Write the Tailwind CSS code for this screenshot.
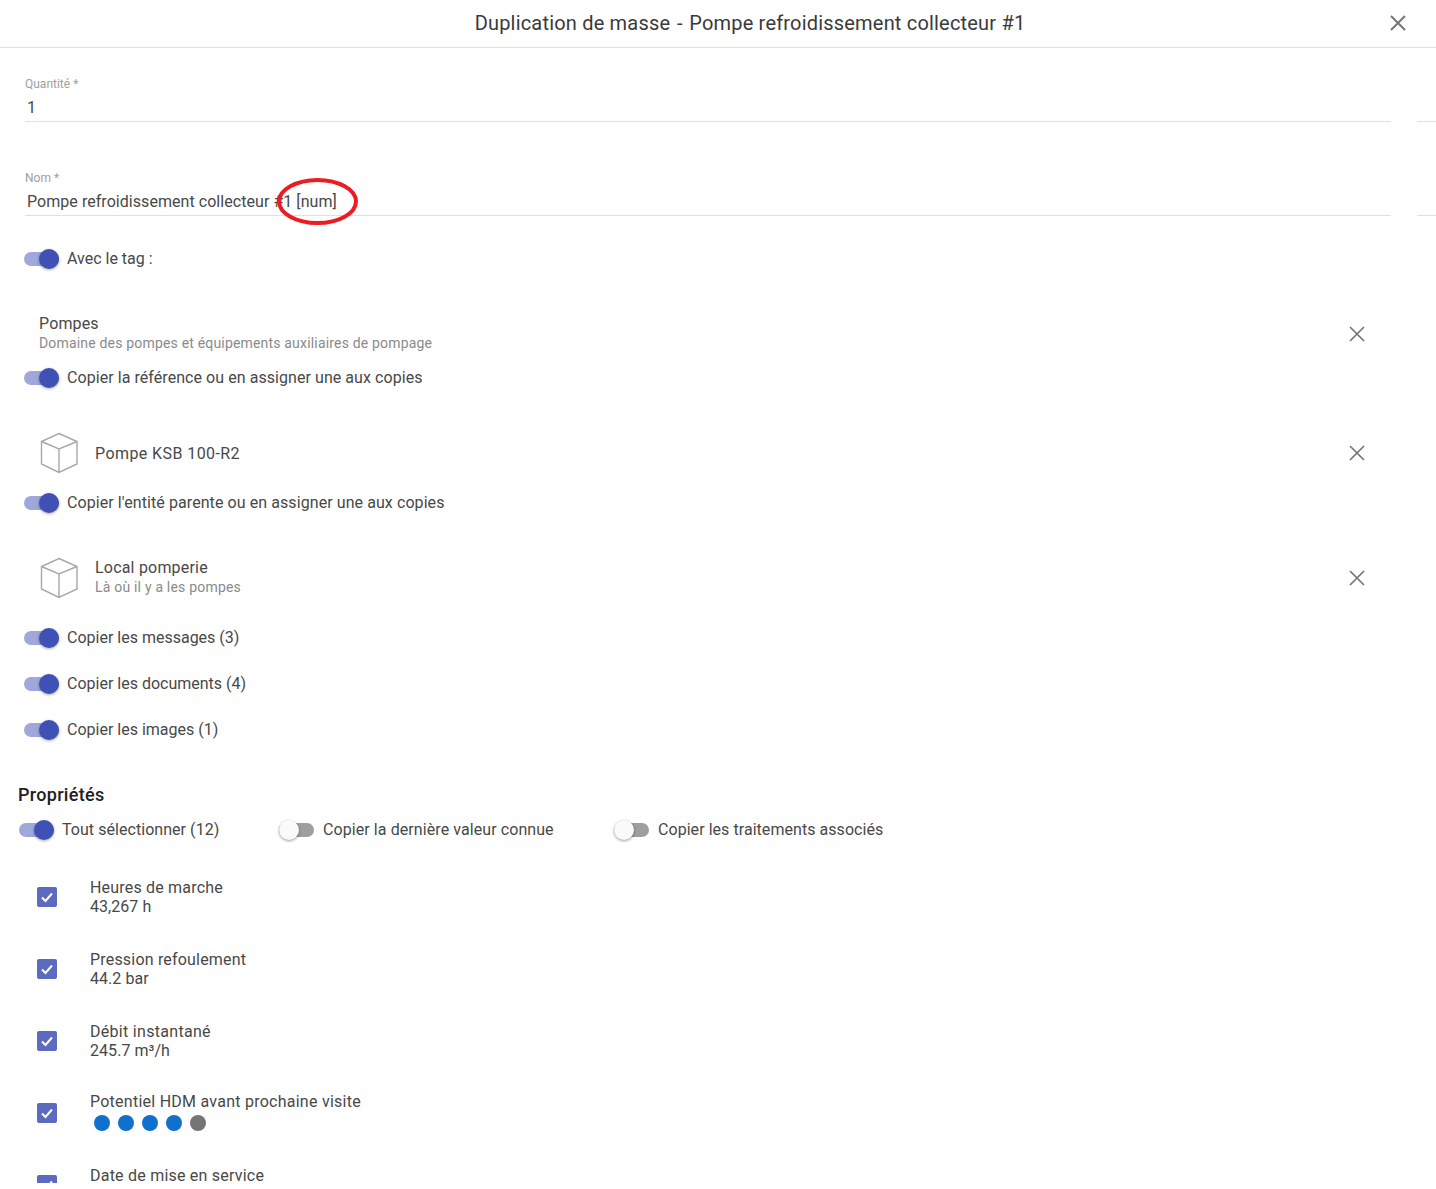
<!DOCTYPE html>
<html lang="fr">
<head>
<meta charset="utf-8">
<script src="https://cdn.jsdelivr.net/npm/@tailwindcss/browser@4"></script>
<title>Duplication de masse</title>
</head>
<body class="bg-white font-['Roboto',sans-serif] text-[16px] text-[#484848]">
<div class="h-[1183px] overflow-hidden relative">
  <header class="relative h-[48px] border-b border-[#e0e0e0] flex items-center justify-center pl-[64px] pb-[2px]">
    <h1 class="text-[20px] tracking-[0.19px] text-[#3a3a3a] font-normal">Duplication de masse <span class="mx-[1.5px]">-</span> Pompe refroidissement collecteur #1</h1>
    <svg class="absolute left-[1390px] top-[15px] w-4 h-4" viewBox="0 0 16 16" fill="none" stroke="#757575" stroke-width="2"><path d="M1 1 15 15M15 1 1 15"/></svg>
  </header>

  <section class="h-[74px] flex items-end gap-[26px] pl-[25px]">
    <div class="flex-1 h-[46px] pt-[1px] border-b border-[#e0e0e0]"><div class="text-[12px] leading-[14px] text-[#9e9e9e]">Quantité *</div><div class="pl-[2px] leading-[24px] mt-[5px]">1</div></div>
    <div class="w-[19px] border-b border-[#e0e0e0]"></div>
  </section>
  <section class="h-[94px] flex items-end gap-[26px] pl-[25px] relative">
    <div class="flex-1 h-[46px] pt-[1px] border-b border-[#e0e0e0]"><div class="text-[12px] leading-[14px] text-[#9e9e9e]">Nom *</div><div class="pl-[2px] leading-[24px] mt-[5px] tracking-[0.05px]">Pompe refroidissement collecteur #1 [num]</div></div>
    <div class="w-[19px] border-b border-[#e0e0e0]"></div>
    <svg class="absolute left-[275px] top-[56px] w-[84px] h-[48px]" viewBox="0 0 84 48" fill="none" stroke="#ed1c24" stroke-width="4"><ellipse cx="42.5" cy="23.5" rx="38.5" ry="21.5"/></svg>
  </section>

  <div class="mt-[23px] h-[40px] pl-[24px] flex items-center gap-[8px] w-max">
    <span class="relative block w-[35px] h-[14px] rounded-full bg-[#9fa8da]"><span class="absolute right-0 top-[-3px] w-5 h-5 rounded-full bg-[#3f51b5] shadow-[0_1px_3px_rgba(0,0,0,0.35)]"></span></span><span>Avec le tag :</span>
  </div>

  <div class="mt-[31px] h-[48px] pl-[39px] pr-[71px] flex items-center justify-between">
    <div class="pb-[2px]"><div class="pt-[2px] leading-[18px] tracking-[0.15px]">Pompes</div><div class="text-[14px] leading-[20px] tracking-[0.18px] text-[#8a8a8a]">Domaine des pompes et équipements auxiliaires de pompage</div></div>
    <svg class="w-[16px] h-[16px]" viewBox="0 0 16 16" fill="none" stroke="#757575" stroke-width="1.7"><path d="M1 1 15 15M15 1 1 15"/></svg>
  </div>

  <div class="h-[40px] pl-[24px] flex items-center gap-[8px] w-max">
    <span class="relative block w-[35px] h-[14px] rounded-full bg-[#9fa8da]"><span class="absolute right-0 top-[-3px] w-5 h-5 rounded-full bg-[#3f51b5] shadow-[0_1px_3px_rgba(0,0,0,0.35)]"></span></span><span class="tracking-[0.06px]">Copier la référence ou en assigner une aux copies</span>
  </div>

  <div class="mt-[25px] h-[60px] pl-[39px] pr-[71px] flex items-center">
    <svg class="w-[40px] h-[42px] mr-[16px]" viewBox="0 0 40 42" fill="none" stroke="#a8a8a8" stroke-width="1.4"><path d="M20 1.5 38 9.5V32L20 40.5 2.5 32V9.5ZM2.5 9.5 20 17 38 9.5M20 17V40.5"/></svg>
    <div class="flex-1 pt-[2px] tracking-[0.42px]">Pompe KSB 100-R2</div>
    <svg class="w-[16px] h-[16px]" viewBox="0 0 16 16" fill="none" stroke="#757575" stroke-width="1.7"><path d="M1 1 15 15M15 1 1 15"/></svg>
  </div>

  <div class="h-[40px] pl-[24px] flex items-center gap-[8px] w-max">
    <span class="relative block w-[35px] h-[14px] rounded-full bg-[#9fa8da]"><span class="absolute right-0 top-[-3px] w-5 h-5 rounded-full bg-[#3f51b5] shadow-[0_1px_3px_rgba(0,0,0,0.35)]"></span></span><span class="tracking-[0.08px]">Copier l'entité parente ou en assigner une aux copies</span>
  </div>

  <div class="mt-[25px] h-[60px] pl-[39px] pr-[71px] flex items-center">
    <svg class="w-[40px] h-[42px] mr-[16px]" viewBox="0 0 40 42" fill="none" stroke="#a8a8a8" stroke-width="1.4"><path d="M20 1.5 38 9.5V32L20 40.5 2.5 32V9.5ZM2.5 9.5 20 17 38 9.5M20 17V40.5"/></svg>
    <div class="flex-1 pb-[2px]"><div class="pt-[2px] leading-[18px] tracking-[0.2px]">Local pomperie</div><div class="text-[14px] leading-[20px] tracking-[0.2px] text-[#8a8a8a]">Là où il y a les pompes</div></div>
    <svg class="w-[16px] h-[16px]" viewBox="0 0 16 16" fill="none" stroke="#757575" stroke-width="1.7"><path d="M1 1 15 15M15 1 1 15"/></svg>
  </div>

  <div class="mt-[10px] flex flex-col gap-[6px]">
    <div class="h-[40px] pl-[24px] flex items-center gap-[8px] w-max"><span class="relative block w-[35px] h-[14px] rounded-full bg-[#9fa8da]"><span class="absolute right-0 top-[-3px] w-5 h-5 rounded-full bg-[#3f51b5] shadow-[0_1px_3px_rgba(0,0,0,0.35)]"></span></span><span>Copier les messages (3)</span></div>
    <div class="h-[40px] pl-[24px] flex items-center gap-[8px] w-max"><span class="relative block w-[35px] h-[14px] rounded-full bg-[#9fa8da]"><span class="absolute right-0 top-[-3px] w-5 h-5 rounded-full bg-[#3f51b5] shadow-[0_1px_3px_rgba(0,0,0,0.35)]"></span></span><span>Copier les documents (4)</span></div>
    <div class="h-[40px] pl-[24px] flex items-center gap-[8px] w-max"><span class="relative block w-[35px] h-[14px] rounded-full bg-[#9fa8da]"><span class="absolute right-0 top-[-3px] w-5 h-5 rounded-full bg-[#3f51b5] shadow-[0_1px_3px_rgba(0,0,0,0.35)]"></span></span><span>Copier les images (1)</span></div>
  </div>

  <h2 class="mt-[33px] pl-[18px] text-[18px] leading-[24px] tracking-[0.3px] font-medium text-[#212121]">Propriétés</h2>
  <div class="mt-[3px] h-[40px] pl-[19px] flex items-center">
    <span class="relative block w-[35px] h-[14px] rounded-full bg-[#9fa8da] mr-[8px]"><span class="absolute right-0 top-[-3px] w-5 h-5 rounded-full bg-[#3f51b5] shadow-[0_1px_3px_rgba(0,0,0,0.35)]"></span></span><span class="w-[217px] tracking-[0.05px]">Tout sélectionner (12)</span>
    <span class="relative block w-[35px] h-[14px] rounded-full bg-[#9e9e9e] mr-[9px]"><span class="absolute left-0 top-[-3px] w-5 h-5 rounded-full bg-[#fafafa] shadow-[0_1px_3px_rgba(0,0,0,0.4)]"></span></span><span class="w-[291px] tracking-[0.08px]">Copier la dernière valeur connue</span>
    <span class="relative block w-[35px] h-[14px] rounded-full bg-[#9e9e9e] mr-[9px]"><span class="absolute left-0 top-[-3px] w-5 h-5 rounded-full bg-[#fafafa] shadow-[0_1px_3px_rgba(0,0,0,0.4)]"></span></span><span class="tracking-[0.05px]">Copier les traitements associés</span>
  </div>

  <ul class="mt-[37px] flex flex-col">
    <li class="h-[72px] pl-[37px] flex items-start">
      <span class="w-5 h-5 rounded-[2px] bg-[#5c6bc0] mr-[33px] flex items-center justify-center"><svg class="w-[12px] h-[12px]" viewBox="0 0 12 12" fill="none" stroke="#fff" stroke-width="2"><path d="M1 6.5 4.5 10 11 2.5"/></svg></span>
      <div class="-mt-[9px]"><div class="leading-[19px] tracking-[0.19px]">Heures de marche</div><div class="leading-[19px] tracking-[0.05px]">43,267 h</div></div>
    </li>
    <li class="h-[72px] pl-[37px] flex items-start">
      <span class="w-5 h-5 rounded-[2px] bg-[#5c6bc0] mr-[33px] flex items-center justify-center"><svg class="w-[12px] h-[12px]" viewBox="0 0 12 12" fill="none" stroke="#fff" stroke-width="2"><path d="M1 6.5 4.5 10 11 2.5"/></svg></span>
      <div class="-mt-[9px]"><div class="leading-[19px] tracking-[0.19px]">Pression refoulement</div><div class="leading-[19px] tracking-[0.05px]">44.2 bar</div></div>
    </li>
    <li class="h-[72px] pl-[37px] flex items-start">
      <span class="w-5 h-5 rounded-[2px] bg-[#5c6bc0] mr-[33px] flex items-center justify-center"><svg class="w-[12px] h-[12px]" viewBox="0 0 12 12" fill="none" stroke="#fff" stroke-width="2"><path d="M1 6.5 4.5 10 11 2.5"/></svg></span>
      <div class="-mt-[9px]"><div class="leading-[19px] tracking-[0.3px]">Débit instantané</div><div class="leading-[19px] tracking-[0.05px]">245.7 m³/h</div></div>
    </li>
    <li class="h-[72px] pl-[37px] flex items-start">
      <span class="w-5 h-5 rounded-[2px] bg-[#5c6bc0] mr-[33px] flex items-center justify-center"><svg class="w-[12px] h-[12px]" viewBox="0 0 12 12" fill="none" stroke="#fff" stroke-width="2"><path d="M1 6.5 4.5 10 11 2.5"/></svg></span>
      <div class="-mt-[11px]"><div class="leading-[19px] tracking-[0.25px]">Potentiel HDM avant prochaine visite</div>
        <div class="flex gap-[8px] pl-[4px] mt-[4px]"><span class="w-4 h-4 rounded-full bg-[#1070cc]"></span><span class="w-4 h-4 rounded-full bg-[#1070cc]"></span><span class="w-4 h-4 rounded-full bg-[#1070cc]"></span><span class="w-4 h-4 rounded-full bg-[#1070cc]"></span><span class="w-4 h-4 rounded-full bg-[#757575]"></span></div>
      </div>
    </li>
    <li class="h-[72px] pl-[37px] flex items-start">
      <span class="w-5 h-5 rounded-[2px] bg-[#5c6bc0] mr-[33px] flex items-center justify-center"><svg class="w-[12px] h-[12px]" viewBox="0 0 12 12" fill="none" stroke="#fff" stroke-width="2"><path d="M1 6.5 4.5 10 11 2.5"/></svg></span>
      <div class="-mt-[6px]"><div class="leading-[14px] tracking-[0.22px]">Date de mise en service</div></div>
    </li>
  </ul>
</div>
</body>
</html>
